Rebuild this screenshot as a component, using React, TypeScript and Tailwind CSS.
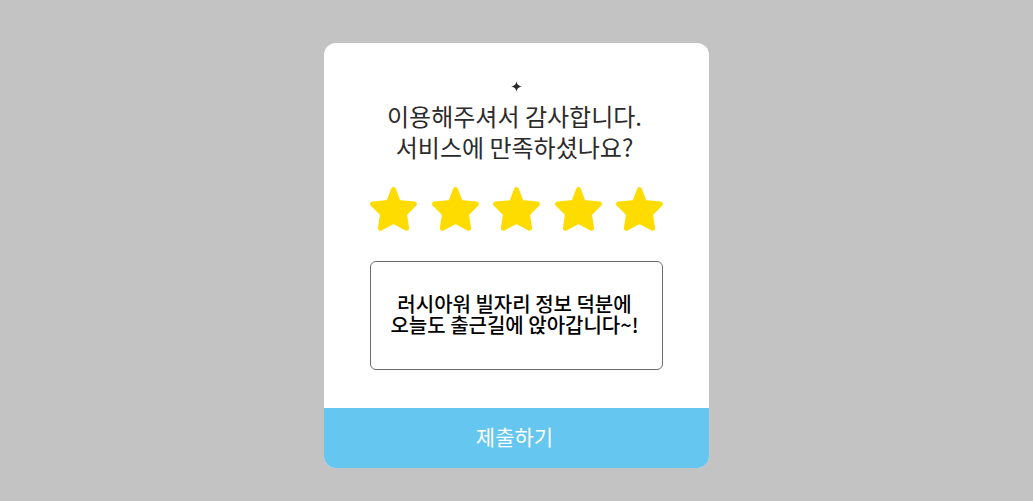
import React, { useState } from 'react';

const scores = [1, 2, 3, 4, 5];

const Sparkle = () => (
  <svg viewBox="0 0 11 11" className="w-[11px] h-[11px] text-[#2b2b2b]" fill="currentColor" aria-hidden="true">
    <path d="M5.5 0C5.9 3.2 7.2 4.8 11 5.5C7.2 6.2 5.9 7.8 5.5 11C5.1 7.8 3.8 6.2 0 5.5C3.8 4.8 5.1 3.2 5.5 0Z" />
    <circle cx="5.5" cy="5.5" r="2.1" />
  </svg>
);

const Star = ({ filled }: { filled: boolean }) => (
  <svg
    viewBox="0 0 47 44"
    className={filled ? 'block w-[47px] h-11 text-[#ffdc00]' : 'block w-[47px] h-11 text-gray-300'}
    fill="currentColor"
    stroke="currentColor"
    strokeWidth="5"
    strokeLinejoin="round"
    aria-hidden="true"
  >
    <path d="M23.5 2.6L28.4 15.6L44.4 17L34.4 27L36.6 41.2L23.5 34.2L10.4 41.2L12.6 27L2.6 17L18.6 15.6Z" />
  </svg>
);

const App = () => {
  const [rating, setRating] = useState(5);
  const [review, setReview] = useState('러시아워 빌자리 정보 덕분에\n오늘도 출근길에 앉아갑니다~!');

  const handleSubmit = (e: React.FormEvent) => {
    e.preventDefault();
  };

  return (
    <div className="min-h-screen bg-[#c3c3c3] flex items-start justify-center px-4 pt-[43px] pb-8 font-['Noto_Sans_CJK_KR',sans-serif]">
      <form onSubmit={handleSubmit} className="w-full max-w-[385px] bg-white rounded-xl overflow-hidden">
        <div className="flex flex-col items-center px-[46px] pt-[38px] pb-[38px]">
          <Sparkle />

          <h1 className="mt-2 pr-1 text-2xl leading-[31px] text-center text-[#2b2b2b] whitespace-nowrap">
            이용해주셔서 감사합니다.
            <br />
            서비스에 만족하셨나요?
          </h1>

          <fieldset className="mt-[25px] w-full flex justify-between" aria-label="만족도">
            {scores.map((score) => (
              <label key={score} className="relative cursor-pointer">
                <input
                  type="radio"
                  name="rating"
                  value={score}
                  checked={rating === score}
                  onChange={() => setRating(score)}
                  aria-label={`${score}점`}
                  className="sr-only"
                />
                <Star filled={score <= rating} />
              </label>
            ))}
          </fieldset>

          <textarea
            value={review}
            onChange={(e) => setReview(e.target.value)}
            aria-label="후기"
            rows={2}
            className="mt-[30px] block w-full h-[109px] resize-none rounded-md border border-[#6b6b6b] pl-1 pr-2 pt-[31px] text-xl leading-[21px] font-medium text-center text-black overflow-hidden focus:outline-none"
          />
        </div>

        <button type="submit" className="w-full h-[60px] bg-[#65c6f0] pr-1 pb-0.5 text-[21px] text-white cursor-pointer">
          제출하기
        </button>
      </form>
    </div>
  );
};

export default App;
